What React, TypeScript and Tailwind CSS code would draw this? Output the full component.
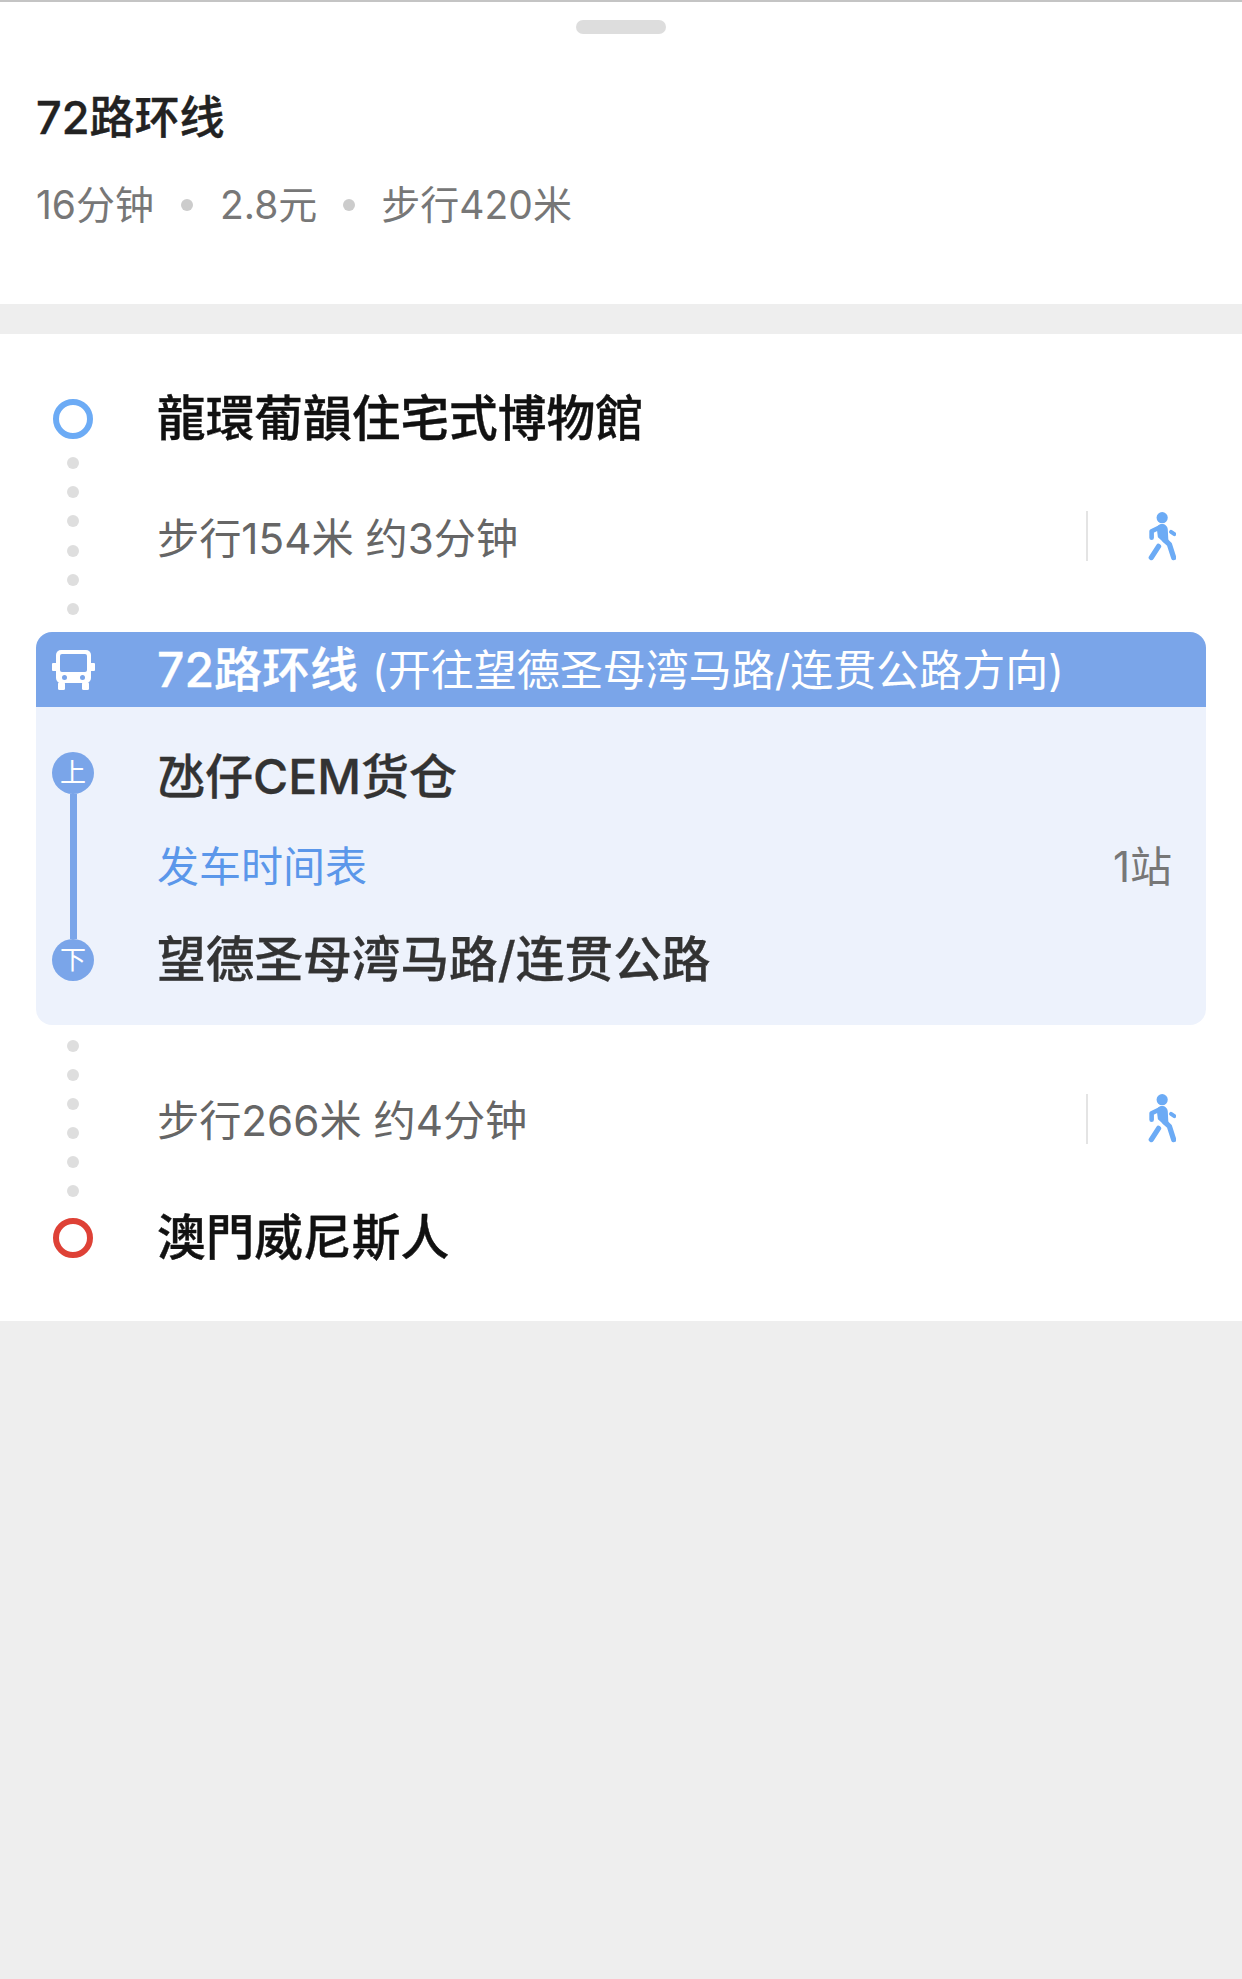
const fontStack = 'font-["Inter","Noto_Sans_CJK_SC",sans-serif]';

function WalkIcon() {
  return (
    <svg width="28" height="49" viewBox="0 0 85 148" fill="none" stroke="#6cabf5" strokeLinecap="round" strokeLinejoin="round">
      <circle cx="43" cy="17" r="17" fill="#6cabf5" stroke="none" />
      <path d="M11 78V58L36 46" strokeWidth="14" />
      <path d="M27 52C27 41 35 36 42 36C52 36 59 42 60 52L62 90L72 108L48 92L30 76Z" fill="#6cabf5" stroke="none" />
      <path d="M50 84L65 98L78 138" strokeWidth="16" />
      <path d="M32 104L10 138" strokeWidth="16" />
      <path d="M70 60L80 67" strokeWidth="12" />
    </svg>
  );
}

function BusIcon() {
  return (
    <svg width="43" height="40" viewBox="0 0 43 40" fill="none">
      <rect x="4" y="0" width="35" height="33" rx="5" fill="#fff" />
      <rect x="8" y="4" width="27" height="18" rx="2" fill="#7aa5e9" />
      <circle cx="12.5" cy="27.5" r="2.5" fill="#7aa5e9" />
      <circle cx="30.5" cy="27.5" r="2.5" fill="#7aa5e9" />
      <rect x="6" y="32" width="7" height="8" rx="1.5" fill="#fff" />
      <rect x="30" y="32" width="7" height="8" rx="1.5" fill="#fff" />
      <rect x="0" y="13" width="5" height="8" rx="1" fill="#fff" />
      <rect x="38" y="13" width="5" height="8" rx="1" fill="#fff" />
    </svg>
  );
}

function Dots() {
  return (
    <div className="flex h-full flex-col items-center justify-between">
      {[0, 1, 2, 3, 4, 5].map((i) => (
        <span key={i} className="h-3 w-3 rounded-full bg-[#dedede]" />
      ))}
    </div>
  );
}

function WalkRow({ text, top }: { text: string; top: string }) {
  return (
    <div className={`flex h-[183px] ${top}`}>
      <div className="mr-[11px] w-[146px] shrink-0">
        <Dots />
      </div>
      <div className="flex flex-1 items-center justify-between pr-[66px]">
        <span className="mt-[5px] text-[42.2px] leading-[60px] text-[#666666]">{text}</span>
        <div className="flex items-center">
          <span className="mr-[60px] h-[50px] w-[2px] bg-[#e4e4e4]" />
          <WalkIcon />
        </div>
      </div>
    </div>
  );
}

function Place({ name, ring }: { name: string; ring: string }) {
  return (
    <div className="flex h-[60px] items-center">
      <div className="mr-[11px] flex w-[146px] shrink-0 justify-center">
        <span className={`h-10 w-10 rounded-full border-[6px] ${ring}`} />
      </div>
      <span className="text-[48.7px] font-medium leading-[60px] text-[#111111] [-webkit-text-stroke:0.4px_#111111]">{name}</span>
    </div>
  );
}

export default function App() {
  return (
    <div className={`min-h-[1979px] bg-[#eeeeee] ${fontStack}`}>
      {/* 顶部摘要 */}
      <div className="h-[304px] border-t-2 border-[#c4c4c4] bg-white">
        <div className="mx-auto mt-[18px] h-[14px] w-[90px] rounded-full bg-[#dddddd]" />
        <h1 className="ml-[36px] mt-[54px] text-[45px] font-medium leading-[60px] text-[#222222] [-webkit-text-stroke:0.4px_#222222]">72路环线</h1>
        <div className="ml-[36px] mt-[30px] flex items-center text-[39px] leading-[54px] text-[#777777]">
          <span>16分钟</span>
          <span className="mx-[27px] h-3 w-3 rounded-full bg-[#cccccc]" />
          <span>2.8元</span>
          <span className="mx-[26px] h-3 w-3 rounded-full bg-[#cccccc]" />
          <span>步行420米</span>
        </div>
      </div>

      {/* 路线详情 */}
      <div className="mt-[30px] bg-white pb-[53px] pt-[55px]">
        <Place name="龍環葡韻住宅式博物館" ring="border-[#6cabf5]" />
        <WalkRow text="步行154米 约3分钟" top="pt-[8px] pb-[17px]" />

        <div className="mx-[36px]">
          <div className="flex h-[75px] items-center rounded-t-[16px] bg-[#7aa5e9] text-white">
            <div className="mr-[47px] flex w-[74px] shrink-0 justify-center">
              <BusIcon />
            </div>
            <span className="text-[48px] font-medium leading-[60px] [-webkit-text-stroke:0.3px_#ffffff]">72路环线</span>
            <span className="ml-[14px] text-[43px] leading-[60px]">(开往望德圣母湾马路/连贯公路方向)</span>
          </div>
          <div className="flex h-[318px] rounded-b-[16px] bg-[#edf2fc]">
            <div className="mr-[47px] flex w-[74px] shrink-0 flex-col items-center pt-[45px]">
              <span className="flex h-[42px] w-[42px] items-center justify-center rounded-full bg-[#7aa5e9] text-[26px] leading-none text-white">上</span>
              <span className="h-[145px] w-[7px] bg-[#7aa5e9]" />
              <span className="flex h-[42px] w-[42px] items-center justify-center rounded-full bg-[#7aa5e9] text-[26px] leading-none text-white">下</span>
            </div>
            <div className="flex-1 pr-[34px] pt-[40px]">
              <div className="text-[48px] font-medium leading-[60px] text-[#333333] [-webkit-text-stroke:0.3px_#333333]">氹仔CEM货仓</div>
              <div className="mt-[30px] flex items-center justify-between text-[42px] leading-[60px]">
                <span className="text-[#5b97ea]">发车时间表</span>
                <span className="text-[#777777]">1站</span>
              </div>
              <div className="mt-[33px] text-[48.7px] font-medium leading-[60px] text-[#333333] [-webkit-text-stroke:0.3px_#333333]">望德圣母湾马路/连贯公路</div>
            </div>
          </div>
        </div>

        <WalkRow text="步行266米 约4分钟" top="pt-[15px] pb-[11px]" />
        <Place name="澳門威尼斯人" ring="border-[#de4136]" />
      </div>
    </div>
  );
}
